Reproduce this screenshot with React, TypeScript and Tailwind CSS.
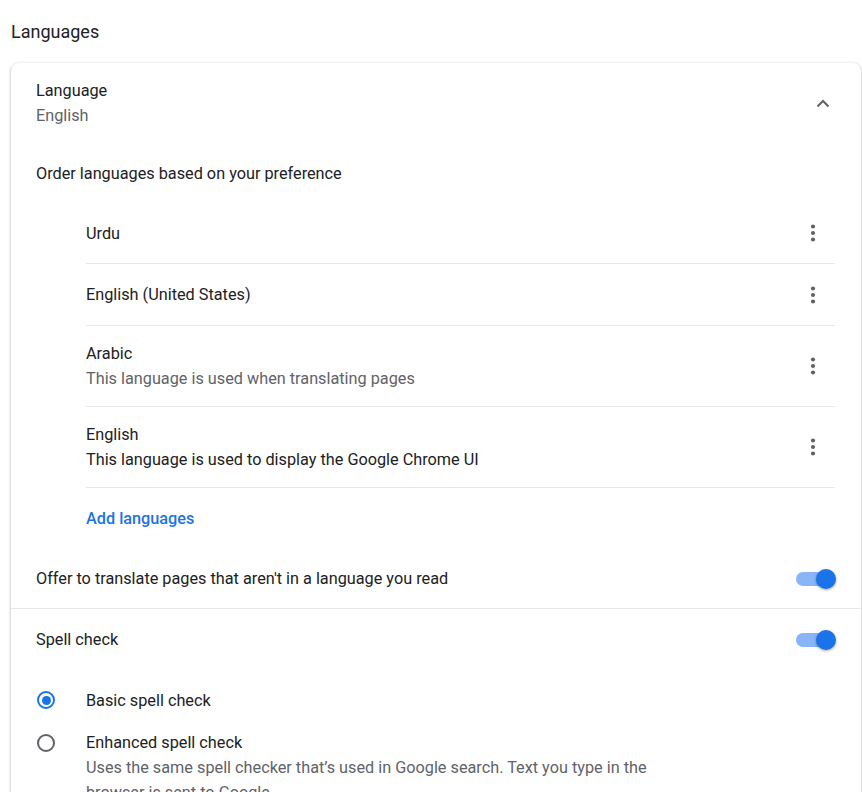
import React from "react";

const font = { fontFamily: "Roboto, 'Noto Sans', Arial, sans-serif" };

function Kebab() {
  return (
    <div className="w-[44px] h-[44px] flex items-center justify-center">
      <svg width="6" height="20" viewBox="0 0 6 20">
        <circle cx="3" cy="3.5" r="2.1" fill="#5f6368" />
        <circle cx="3" cy="10" r="2.1" fill="#5f6368" />
        <circle cx="3" cy="16.5" r="2.1" fill="#5f6368" />
      </svg>
    </div>
  );
}

function Toggle() {
  return (
    <div className="relative w-[40px] h-[20px]">
      <div className="absolute left-0 top-[3px] w-[36px] h-[14px] rounded-full bg-[#8ab4f8]" />
      <div className="absolute right-0 top-0 w-[20px] h-[20px] rounded-full bg-[#1a73e8] shadow-[0_1px_3px_rgba(0,0,0,0.35)]" />
    </div>
  );
}

function Radio({ checked }: { checked?: boolean }) {
  return (
    <div className="w-[20px] h-[20px] flex items-center justify-center">
      <div
        className={
          checked
            ? "w-[18px] h-[18px] rounded-full border-[2px] border-[#1a73e8] flex items-center justify-center"
            : "w-[18px] h-[18px] rounded-full border-[2px] border-[#5f6368]"
        }
      >
        {checked && <div className="w-[9px] h-[9px] rounded-full bg-[#1a73e8]" />}
      </div>
    </div>
  );
}

function LangRow({ name, sub, dark, h }: { name: string; sub?: string; dark?: boolean; h: string }) {
  return (
    <div className={"flex items-center justify-between border-b border-[#e8e8e8] " + h}>
      <div className="flex flex-col">
        <div className="text-[#202124]">{name}</div>
        {sub && <div className={dark ? "text-[#202124]" : "text-[#5f6368]"}>{sub}</div>}
      </div>
      <Kebab />
    </div>
  );
}

export default function App() {
  return (
    <div className="bg-white min-h-[792px] pl-[11px] pr-[1px] text-[16.25px] leading-[25px]" style={font}>
      <div className="h-[63px] flex items-center text-[18px] text-[#202124]">Languages</div>
      <div className="rounded-[8px] bg-white shadow-[0_1px_2px_rgba(60,64,67,0.3),0_1px_3px_1px_rgba(60,64,67,0.15)] pb-[40px]">
        <div className="h-[80px] flex items-center justify-between pl-[25px] pr-[25px]">
          <div className="flex flex-col">
            <div className="text-[#202124]">Language</div>
            <div className="text-[#5f6368]">English</div>
          </div>
          <div className="w-[26px] flex items-center justify-center">
            <svg width="14" height="9" viewBox="0 0 14 9">
              <path d="M1.5 7.5 L7 2 L12.5 7.5" fill="none" stroke="#5f6368" strokeWidth="2" />
            </svg>
          </div>
        </div>
        <div className="h-[60px] flex items-center pl-[25px] text-[#202124]">Order languages based on your preference</div>
        <div className="ml-[75px] mr-[26px] flex flex-col">
          <LangRow name="Urdu" h="h-[61px]" />
          <LangRow name="English (United States)" h="h-[62px]" />
          <LangRow name="Arabic" sub="This language is used when translating pages" h="h-[81px]" />
          <LangRow name="English" sub="This language is used to display the Google Chrome UI" dark h="h-[81px]" />
          <div className="h-[61px] flex items-center text-[#1a73e8] font-medium">Add languages</div>
        </div>
        <div className="h-[60px] flex items-center justify-between pl-[25px] pr-[25px] border-b border-[#e8e8e8]">
          <div className="text-[#202124]">Offer to translate pages that aren't in a language you read</div>
          <Toggle />
        </div>
        <div className="h-[61px] flex items-center justify-between pl-[25px] pr-[25px]">
          <div className="text-[#202124]">Spell check</div>
          <Toggle />
        </div>
        <div className="h-[60px] flex items-center pl-[25px]">
          <Radio checked />
          <div className="ml-[30px] text-[#202124]">Basic spell check</div>
        </div>
        <div className="flex items-start pl-[25px]">
          <div className="h-[25px] flex items-center">
            <Radio />
          </div>
          <div className="ml-[30px] flex flex-col">
            <div className="text-[#202124]">Enhanced spell check</div>
            <div className="text-[#5f6368]">
              Uses the same spell checker that’s used in Google search. Text you type in the
              <br />
              browser is sent to Google.
            </div>
          </div>
        </div>
      </div>
    </div>
  );
}
